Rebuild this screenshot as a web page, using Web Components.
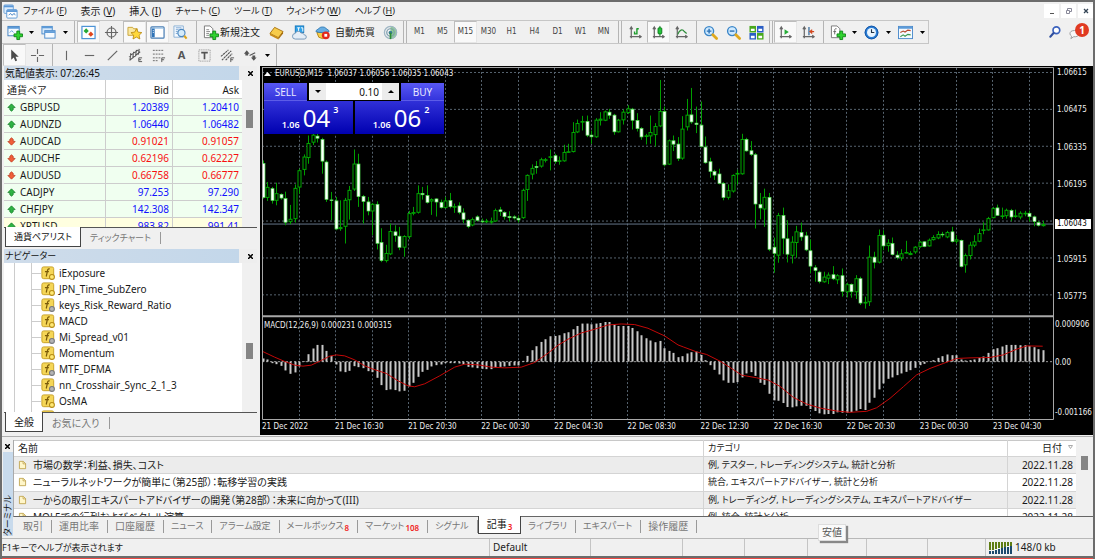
<!DOCTYPE html>
<html>
<head>
<meta charset="utf-8">
<title>EURUSD,M15</title>
<style>
  html, body { margin: 0; padding: 0; }
  body {
    background: #f0f0f0; color: #1a1a1a;
    font: 10px/16px "Noto Sans", "Noto Sans CJK JP", sans-serif;
    font-feature-settings: "palt";
  }
</style>
</head>
<body>
<app-window>
  <menu-bar></menu-bar>
  <main-toolbar></main-toolbar>
  <draw-toolbar></draw-toolbar>
  <work-space>
    <dock-panel slot="side" heading="気配値表示: 07:26:45" tabs="通貨ペアリスト|ティックチャート"><market-watch></market-watch></dock-panel>
    <dock-panel tall slot="side" heading="ナビゲーター" tabs="全般|お気に入り"><nav-tree></nav-tree></dock-panel>
    <chart-view><trade-panel></trade-panel></chart-view>
  </work-space>
  <terminal-panel></terminal-panel>
  <status-bar></status-bar>
</app-window>

<script>
const RESET = `<style>
  *, :host { box-sizing: border-box; }
  button { font: inherit; font-feature-settings: inherit; color: inherit; background: none; border: 0; margin: 0; padding: 0; white-space: nowrap; }
  svg { display: block; }
  .kana { font-size: 9px; }
</style>`;

/* Labels made mostly of kana are set one size down, as in the narrow system font. */
const kana = t => /[ァ-ヶー]{3}|[ぁ-ん]{2}/.test(t) ? "kana" : "";

class Part extends HTMLElement {
  constructor() {
    super();
    this.attachShadow({ mode: "open" });
  }
  connectedCallback() {
    if (this.shadowRoot.childNodes.length) return;
    const t = document.createElement("template");
    t.innerHTML = RESET + this.view();
    this.shadowRoot.append(t.content.cloneNode(true));
  }
  view() { return ""; }
}

const AX = '<path d="M3.500 2v12M2 12.500h12M2 4.500l1.500-2.500 1.500 2.500M12 11l2 1.500-2 1.500" fill="none" stroke="#666" stroke-width="1.300"/>';
const PLUS = '<path d="M10.500 6.500h3v3h3v3h-3v3h-3v-3h-3v-3h3z" fill="#2fd32f" stroke="#12871a"/>';
const LENS = '<circle cx="6.500" cy="6.500" r="4.800" fill="#cfeaff" stroke="#3b86c8" stroke-width="1.500"/><path d="M10.500 10.500l4 4" stroke="#e0a91c" stroke-width="3" stroke-linecap="round"/>';
const ICONS = {
  logo: '<rect x="1" y="1" width="10" height="9" rx="1" fill="#dcecfb" stroke="#6fa3d8"/><path d="M1 2.500h10" stroke="#5b97d6" stroke-width="2"/><rect x="4" y="6" width="11" height="9" rx="1" fill="#fff" stroke="#5b97d6"/><path d="M4 7.500h11" stroke="#5b97d6" stroke-width="2"/><path d="M6 12l2-2 1.500 2L12 10l1 2" fill="none" stroke="#4a86c6"/>',
  newchart: '<rect x="1" y="1.500" width="12" height="10" fill="#f5faff" stroke="#3f7fbf"/><path d="M1 3h12" stroke="#5d9bd8" stroke-width="2"/><path d="M3 8l2-2 2 2" fill="none" stroke="#5d9bd8"/>' + PLUS,
  profiles: '<rect x="1" y="1.500" width="11" height="8" fill="#d7e9fa" stroke="#4a8acb"/><path d="M1 2.500h11" stroke="#5d9bd8" stroke-width="2"/><rect x="4" y="6" width="11" height="8" fill="#f5faff" stroke="#4a8acb"/><path d="M4 7.500h11" stroke="#5d9bd8" stroke-width="2"/>',
  market: '<rect x="1" y="1.500" width="14" height="13" fill="#fff" stroke="#4c93d6" stroke-width="1.300"/><path d="M5.500 3.500l2.800 2.800-2.800 2.800-2.800-2.800z" fill="#27a836"/><path d="M10.500 7l2.800 2.800-2.800 2.800-2.800-2.800z" fill="#e0471f"/>',
  target: '<circle cx="8" cy="8" r="4.800" fill="none" stroke="#666" stroke-width="1.300"/><path d="M8 1v14M1 8h14" stroke="#666" stroke-width="1.200"/>',
  favorite: '<path d="M1 2.500h5l1 1.500h4v7H1z" fill="#fbe9a2" stroke="#c9a43a"/><path d="M10 4l1.800 3.600 4 .5-2.900 2.800.8 4-3.700-2-3.600 2 .7-4-2.900-2.800 4-.5z" fill="#ffd83a" stroke="#b98a12" stroke-width=".9"/>',
  navigator: '<rect x="1" y="2" width="14" height="12" rx="1" fill="#fff" stroke="#4a7fb5" stroke-width="1.300"/><path d="M2 3h3v10H2z" fill="#2f73b7"/><path d="M2 3.500h12" stroke="#9cc4e8"/><path d="M3 6h1M3 8h1" stroke="#fff"/>',
  tester: '<path d="M1 1h10v12H1z" fill="#f5faff" stroke="#8ab0d4"/><path d="M3 3h6M3 5h3M3 7h2M3 9h2" stroke="#7aa5d2"/><circle cx="9" cy="8.500" r="3.800" fill="#d4ebfb" stroke="#4a86bf" stroke-width="1.200"/><path d="M12 11.500l2.500 3" stroke="#dba41b" stroke-width="2.200"/>',
  order: '<path d="M1.500 1h6l3 3v9.500h-9z" fill="#fff" stroke="#777"/><path d="M3.500 5h3M3.500 7h4M3.500 9h3M3.500 11h3" stroke="#888"/>' + PLUS,
  gold: '<path d="M1 9l5-6.500 9 4.500-5 6.500z" fill="#f7cc4b" stroke="#a97311"/><path d="M1 9l9 4.500v2L1 11z" fill="#c98c17"/><path d="M10 13.500L15 7v2l-5 6.500z" fill="#a66c0c"/>',
  cloud: '<rect x="3.500" y="1" width="9" height="7" fill="#2fa3ea" stroke="#1677bb"/><path d="M5.500 3h3M7 3v4M9.500 3h2v4" stroke="#fff" fill="none"/><path d="M3.500 15a3 3 0 010-6 3.200 3.200 0 016-.5 3 3 0 013.500 2 2.200 2.200 0 010 4.500z" fill="#e4edf6" stroke="#7396b8"/>',
  expert: '<path d="M2 8h11l-2 5-3 1.500-4-1.500z" fill="#f7ce4a" stroke="#b48413"/><path d="M1 7c0-2 2-2 3-3 1-2.500 7-2.500 8 0 1 1 3 1 3 3-3 1.500-11 1.500-14 0z" fill="#69aee2" stroke="#357db5"/><circle cx="11.500" cy="11" r="4.200" fill="#e2291c"/><rect x="10" y="9.500" width="3" height="3" fill="#fff"/>',
  signal: '<path d="M8 1a7 7 0 010 14z" fill="#8fce8f"/><circle cx="8" cy="8" r="6.500" fill="none" stroke="#9fb6c4" stroke-width="1.400"/><circle cx="8" cy="8" r="4" fill="none" stroke="#7b9cae" stroke-width="1.300"/><circle cx="8" cy="8" r="2" fill="#3c7f9c"/><path d="M8 8v7" stroke="#2a8c34" stroke-width="1.800"/>',
  bars: AX + '<path d="M7 10V7M9.500 10V3.500M9.500 4h2M7.500 9.500h2" stroke="#1c9b2b" stroke-width="1.500"/>',
  candles: AX + '<path d="M9.500 1v11" stroke="#0c7a1b"/><rect x="7.500" y="3" width="4" height="6.500" rx="1" fill="#24c43a" stroke="#0c7a1b"/>',
  line: AX + '<path d="M4 10c2-5 5-6 7-3l2.500 2" fill="none" stroke="#2e8d3a" stroke-width="1.300"/>',
  zoomin: LENS + '<path d="M4 6.500h5M6.500 4v5" stroke="#2d72b4" stroke-width="1.500"/>',
  zoomout: LENS + '<path d="M4 6.500h5" stroke="#2d72b4" stroke-width="1.500"/>',
  tiles: '<path d="M.5 1h7v7h-7z" fill="#48a81d"/><path d="M8.500 1h7v7h-7z" fill="#2a5dc4"/><path d="M.5 8.500h7v7h-7z" fill="#2a5dc4"/><path d="M8.500 8.500h7v7h-7z" fill="#48a81d"/><path d="M2 4h4v2.500H2zM10 4h4v2.500h-4zM2 11.500h4V14H2zM10 11.500h4V14h-4z" fill="#fff"/>',
  autoscroll: AX + '<path d="M7 4.500v6l4.500-3z" fill="#27ad37"/>',
  shift: AX + '<path d="M8.500 2v9" stroke="#3b6f9f" stroke-width="1.400"/><path d="M14 7H10M12 5l-2.500 2 2.500 2" fill="none" stroke="#d2471f" stroke-width="1.300"/>',
  indicators: '<path d="M1.500 1h6l3 3v9.500h-9z" fill="#fff" stroke="#777"/><path d="M7 4c-2-.5-2 1-2 2v4M3.500 7h3" stroke="#666" fill="none"/>' + PLUS,
  clock: '<circle cx="8" cy="8" r="7.300" fill="#2b7fd6"/><circle cx="8" cy="8" r="6.800" fill="none" stroke="#1554a3"/><circle cx="8" cy="8" r="4.800" fill="#eaf5ff"/><path d="M8 4.500V8h3" fill="none" stroke="#234" stroke-width="1.200"/>',
  template: '<rect x=".5" y="1.500" width="15" height="13" fill="#f5faff" stroke="#4a8acb"/><path d="M1 3h14" stroke="#5d9bd8" stroke-width="2"/><path d="M2.500 8l3-1.500 2 1 3-2 3 .5" fill="none" stroke="#b5462b" stroke-width="1.200"/><path d="M2.500 12.500l3-2 2 1.500 3-2 3 .5" fill="none" stroke="#3c9950" stroke-width="1.200"/>',
  search: '<circle cx="10" cy="5.500" r="3.600" fill="#fff" stroke="#3b62bd" stroke-width="1.800"/><path d="M7 8.500L3.500 12.500" stroke="#2f4f9f" stroke-width="2.200" stroke-linecap="round"/>',
  chat: '<path d="M1 9.500a5 3.600 0 1110 0 5 3.600 0 01-6 3l-3 2 .8-2.500A4 4 0 011 9.500z" fill="#f8f8f8" stroke="#999"/>',
  cursor: '<path d="M4.500 1.500v11l2.700-2.400 1.700 4 1.900-.8-1.700-3.900h3.400z" fill="#4b4b4b"/>',
  cross: '<path d="M8 1v5.500M8 9.500V15M1 8h5.500M9.500 8H15" stroke="#666" stroke-width="1.200"/>',
  vline: '<path d="M8 3v10" stroke="#666" stroke-width="1.200"/>',
  hline: '<path d="M3 8h10" stroke="#666" stroke-width="1.200"/>',
  trend: '<path d="M3 13L13 3" stroke="#666" stroke-width="1.300"/>',
  channel: '<path d="M1 9l10-7M2 13L13 4M3 5.500l-1 8M6 4l-1 7M9 2L8 9M12 1l-1 6" stroke="#555" stroke-width="1.100"/><path d="M15 10.500h-3.500v4H15M11.500 12.500H14" fill="none" stroke="#555"/>',
  fibo: '<path d="M2 2.500h12M2 6.500h12M2 10.500h8M2 13.500h6" stroke="#666" stroke-dasharray="2 1"/><path d="M15 10.500h-3.500v4.500M11.500 12.500H14" fill="none" stroke="#555"/>',
  label: '<rect x="2" y="2" width="12" height="12" fill="none" stroke="#888" stroke-dasharray="1 1"/><path d="M4.500 5h7M8 5v7" stroke="#555" stroke-width="1.800"/>',
  fan: '<path d="M1 9l8-7M2 13L12 3M6 13l7-7" stroke="#555" stroke-width="1.200" stroke-dasharray="2.500 .6"/><path d="M15 10.500h-3.500v4.500M11.500 12.500H14" fill="none" stroke="#555"/>',
  shapes: '<path d="M4 2.500L7 6H5.500v2h-3V6H1z" fill="#555"/><path d="M7 8l6-3" stroke="#555" stroke-width="1.200"/><path d="M11.500 13.500l-3-3.500H10V8h3v2h1.500z" fill="#555"/>',
  up: '<path d="M8 1.500L14.500 8 11 8.500V12L8 14.500 5 12V8.500L1.500 8z" fill="#2fb344" stroke="#137a26" stroke-width="1.300"/>',
  down: '<path d="M8 14.500L14.500 8 11 7.500V4L8 1.500 5 4v3.500L1.500 8z" fill="#f0603a" stroke="#b8341b" stroke-width="1.300"/>',
  doc: '<path d="M2.500 1.500h7l4 4v9h-11z" fill="#fff6c9" stroke="#b99a3f" stroke-width="1.400"/><path d="M9 2v4h4.500" fill="none" stroke="#b99a3f" stroke-width="1.300"/>'
};
ICONS.fgold = '<rect x="1" y="1" width="13.500" height="13.500" rx="2" fill="#f5d657" stroke="#c39a1b"/><path d="M10 3.500c-2-1-2.500 1-2.800 3L6 12M4.500 6.500h4.500" fill="none" stroke="#7a5a08" stroke-width="1.400"/><circle cx="12.500" cy="12.500" r="2.800" fill="#ffe873" stroke="#b58a14" stroke-width="1.200"/>';
ICONS.fgray = ICONS.fgold.replace('#ffe873" stroke="#b58a14', '#b4b4b4" stroke="#75777c');

class ToolIcon extends Part {
  view() {
    return `<style>:host { display: block; flex: none; width: 15px; height: 15px; } svg { width: 100%; height: 100%; overflow: visible; }</style>
      <svg viewBox="0 0 16 16" aria-hidden="true">${ICONS[this.getAttribute("name")]}</svg>`;
  }
}

class ToolButton extends Part {
  view() {
    return `<style>
      :host { display: flex; flex: none; min-width: 23px; height: 22px; }
      button { flex: 1; display: flex; align-items: center; justify-content: center; gap: 2px; border: 1px solid transparent; padding: 0 1px; }
      :host([text]) button { padding-right: 4px; }
      :host([roomy]) button { gap: 5px; padding: 0 3px; }
      :host([pressed]) button { background: #f9f9f9; border-color: #bdbdbd #e6e6e6 #e6e6e6 #bdbdbd; }
      :host([frame]) button { padding: 0; font: 8px/12px "DejaVu Sans Condensed", "DejaVu Sans", sans-serif; color: #444; }
    </style><button type="button" aria-label="${this.getAttribute("tip") || ""}"><slot></slot></button>`.replace(' aria-label=""', "");
  }
}

class DropArrow extends Part {
  view() {
    return `<style>:host { display: flex; flex: none; width: 11px; } button { flex: 1; display: grid; place-items: center; }</style>
      <button type="button" aria-label="メニュー"><svg width="5" height="3" viewBox="0 0 5 3"><path d="M0 0h5L2.500 3z"/></svg></button>`;
  }
}

class ToolSep extends Part {
  view() {
    return `<style>
      :host { display: flex; justify-content: center; flex: none; width: 6px; height: 22px; }
      :host([wide]) { width: 9px; }
      :host([double]) { gap: 2px; }
      i { width: 1px; background: #b4b4b4; }
      .b { display: none; } :host([double]) .b { display: block; }
    </style><i></i><i class="b"></i>`;
  }
}

const tool = (name, tip, extra = "") => `<tool-button tip="${tip}" ${extra}><tool-icon name="${name}"></tool-icon></tool-button>`;

class AppWindow extends Part {
  view() {
    return `<style>
      :host { display: flex; flex-direction: column; height: 100vh; min-height: 480px; overflow: hidden; background: #f0f0f0;
        border: 2px solid #6c6c6c; border-bottom: 0; }
      .edge { flex: none; height: 3px; border-top: 2px solid #6c6c6c; background: #ee4a45; }
    </style><slot></slot><div class="edge"></div>`;
  }
}

class MenuBar extends Part {
  view() {
    const items = ["ファイル|F", "表示|V", "挿入|I", "チャート|C", "ツール|T", "ウィンドウ|W", "ヘルプ|H"];
    return `<style>
      :host { display: flex; flex: none; align-items: center; height: 18px; padding-left: 1px; }
      nav { display: flex; flex: 1; gap: 14px; padding-left: 5px; }
      .win { display: flex; gap: 2px; }
      .win button { width: 15px; height: 14px; background: #fff; display: grid; place-items: center; }
    </style>
    <tool-icon name="logo"></tool-icon>
    <nav>${items.map(i => { const [t, k] = i.split("|"); return `<button type="button" class="${kana(t)}">${t} (<u>${k}</u>)</button>`; }).join("")}</nav>
    <div class="win">
      <button type="button" aria-label="最小化"><svg width="8" height="8"><path d="M2 6.500h4" stroke="#555"/></svg></button>
      <button type="button" aria-label="元に戻す"><svg width="8" height="8" fill="none" stroke="#889"><path d="M2.500 3V1.500h4v3H5M1.500 3.500h3v3h-3z"/></svg></button>
      <button type="button" aria-label="閉じる"><svg width="8" height="8"><path d="M2 2l4 4M6 2L2 6" stroke="#345" stroke-width="1.300"/></svg></button>
    </div>`;
  }
}

class MainToolbar extends Part {
  view() {
    const frames = ["M1", "M5", "M15", "M30", "H1", "H4", "D1", "W1", "MN"];
    const p = "pressed";
    return `<style>
      :host { display: flex; flex: none; height: 24px; align-items: center; }
      .row { display: flex; align-items: center; height: 24px; padding-left: 1px; border: solid #c6c6c6; border-width: 1px 1px 1px 0; }
      .frames { display: flex; }
      .end { flex: 1; display: flex; justify-content: flex-end; align-items: center; gap: 7px; padding-right: 9px; }
      .chat { position: relative; }
      .chat b { position: absolute; right: -5px; top: -2px; width: 14px; height: 14px; border-radius: 7px; background: #e03a22; color: #fff; font-size: 10px; line-height: 14px; text-align: center; }
    </style>
    <div class="row">
      ${tool("newchart", "新規チャート")}<drop-arrow></drop-arrow>
      ${tool("profiles", "チャートの組表示")}<drop-arrow></drop-arrow><tool-sep></tool-sep>
      ${tool("market", "気配値表示", p)}${tool("target", "データウィンドウ")}${tool("favorite", "ナビゲーター", p)}${tool("navigator", "ターミナル", p)}${tool("tester", "ストラテジーテスター")}
      <tool-sep wide></tool-sep>
      <tool-button text><tool-icon name="order"></tool-icon>新規注文</tool-button>
      ${tool("gold", "MetaEditor")}${tool("cloud", "クラウド")}
      <tool-button roomy><tool-icon name="expert"></tool-icon>自動売買</tool-button>
      ${tool("signal", "シグナル")}
      <tool-sep double></tool-sep>
      <div class="frames">${frames.map(f => `<tool-button frame ${f === "M15" ? p : ""}>${f}</tool-button>`).join("")}</div>
      <tool-sep wide double></tool-sep>
      ${tool("bars", "バーチャート")}${tool("candles", "ローソク足", p)}${tool("line", "ラインチャート")}<tool-sep></tool-sep>
      ${tool("zoomin", "拡大")}${tool("zoomout", "縮小")}${tool("tiles", "整列")}<tool-sep double></tool-sep>
      ${tool("autoscroll", "自動スクロール", p)}${tool("shift", "チャートシフト")}<tool-sep></tool-sep>
      ${tool("indicators", "インディケータ")}<drop-arrow></drop-arrow>
      ${tool("clock", "時間足設定")}<drop-arrow></drop-arrow>
      ${tool("template", "定型チャート")}<drop-arrow></drop-arrow>
    </div>
    <div class="end"><button type="button" aria-label="検索"><tool-icon name="search"></tool-icon></button>
      <button type="button" class="chat"><tool-icon name="chat"></tool-icon><b>1</b></button></div>`;
  }
}

class DrawToolbar extends Part {
  view() {
    return `<style>
      :host { display: flex; flex: none; height: 22px; align-items: center; padding-left: 1px; }
      b { font-size: 11px; color: #555; }
    </style>
    ${tool("cursor", "カーソル", "pressed")}${tool("cross", "クロスヘア")}<tool-sep></tool-sep>
    ${tool("vline", "垂直線")}${tool("hline", "水平線")}${tool("trend", "トレンドライン")}${tool("channel", "チャネル")}${tool("fibo", "フィボナッチ")}
    <tool-button><b>A</b></tool-button>${tool("label", "テキストラベル")}${tool("fan", "ファン")}${tool("shapes", "矢印")}<drop-arrow></drop-arrow><tool-sep></tool-sep>`;
  }
}

class WorkSpace extends Part {
  view() {
    return `<style>
      :host { display: grid; flex: 1; min-height: 0; grid-template-columns: 255px minmax(0, 1fr); gap: 3px; }
      .side { display: flex; flex-direction: column; min-height: 0; gap: 2px; padding-bottom: 4px; }
    </style><div class="side"><slot name="side"></slot></div><slot></slot>`;
  }
}

class DockPanel extends Part {
  view() {
    const head = this.getAttribute("heading");
    const tabs = this.getAttribute("tabs").split("|");
    return `<style>
      :host { display: flex; flex-direction: column; flex: 1 1 0; min-height: 0; padding-left: 2px; }
      :host([tall]) { flex-basis: 2px; }
      header { display: flex; align-items: center; flex: none; height: 14px; padding: 0 4px 0 1px; color: #111; background: linear-gradient(90deg, #cfdcea, #c3d7ea 93%, #eee 93%); }
      header span { flex: 1; line-height: 14px; }
      .body { flex: 1; min-height: 0; overflow: hidden; background: #fff; border-bottom: 1px solid #555; }
      footer { display: flex; flex: none; height: 19px; }
      footer button { padding: 0 9px; color: #777; }
      footer button:first-child { color: #111; background: #fff; border: 1px solid #444; border-top: 0; margin: -1px 0 0 1px; padding: 0 8px; }
      footer i { width: 1px; margin: 4px 0 3px; background: #999; }
    </style>
    <header><span class="${kana(head)}">${head}</span>
      <button type="button" aria-label="閉じる"><svg width="5" height="5"><path d="M0 0l5 5M5 0L0 5" stroke="#000" stroke-width="1.500"/></svg></button></header>
    <div class="body"><slot></slot></div>
    <footer>${tabs.map(t => `<button type="button" class="${kana(t)}">${t}</button>`).join("")}<i></i></footer>`;
  }
}

class MarketWatch extends Part {
  view() {
    const rows = [["GBPUSD", "1.20389", "1.20410", 1], ["AUDNZD", "1.06440", "1.06482", 1], ["AUDCAD", "0.91021", "0.91057", 0],
      ["AUDCHF", "0.62196", "0.62227", 0], ["AUDUSD", "0.66758", "0.66777", 0], ["CADJPY", "97.253", "97.290", 1],
      ["CHFJPY", "142.308", "142.347", 1], ["XPTUSD", "983.82", "991.41", 1]];
    return `<style>
      :host { display: flex; }
      table { flex: 1; border-collapse: separate; border-spacing: 0; table-layout: fixed; width: 100%; }
      th, td { height: 17px; line-height: 16px; padding: 0 3px; border: solid #cdcdcd; border-width: 0 1px 1px 0; font-weight: 400; text-align: right; }
      th { height: 19px; padding-top: 1px; }
      th:first-child, td:first-child { text-align: left; }
      td:last-child, th:last-child { border-right: 0; }
      tbody tr { background: #f0fff0; } tbody tr:last-child { background: #ffffe0; }
      .up { color: #1111ff; } .down { color: #f81010; }
      .s { display: flex; align-items: center; gap: 4px; }
      .s tool-icon { width: 9px; height: 9px; }
      .bar { width: 15px; background: #f0f0f0; padding: 30px 4px 0; } .bar i { display: block; height: 18px; background: #858585; }
    </style>
    <table><colgroup><col style="width:102px"><col style="width:67px"><col></colgroup>
    <thead><tr><th>通貨ペア</th><th>Bid</th><th>Ask</th></tr></thead><tbody>
    ${rows.map(([s, b, a, u]) => { const c = u ? "up" : "down"; return `<tr><td><span class="s"><tool-icon name="${c}"></tool-icon>${s}</span></td><td class="${c}">${b}</td><td class="${c}">${a}</td></tr>`; }).join("")}
    </tbody></table><div class="bar"><i></i></div>`;
  }
}

class NavTree extends Part {
  view() {
    const rows = ["iExposure", "JPN_Time_SubZero", "keys_Risk_Reward_Ratio*", "MACD", "Mi_Spread_v01*", "Momentum", "MTF_DFMA*", "nn_Crosshair_Sync_2_1_3*", "OsMA", "Parabolic"];
    return `<style>
      :host { display: flex; }
      ul { flex: 1; margin: 0; padding: 2px 0 0; list-style: none; background: linear-gradient(#ccc, #ccc) 10px 0 / 1px 100% no-repeat, linear-gradient(#ccc, #ccc) 27px 0 / 1px 100% no-repeat; }
      li { display: flex; align-items: center; height: 16px; gap: 4px; }
      li::before { content: ""; width: 10px; height: 1px; margin: 0 -4px 0 27px; background: #ccc; }
      tool-icon { width: 14px; height: 14px; }
      .bar { width: 15px; background: #f0f0f0; padding: 80px 4px 0; } .bar i { display: block; height: 16px; background: #858585; }
    </style>
    <ul>${rows.map(r => `<li><tool-icon name="${r.endsWith("*") ? "fgray" : "fgold"}"></tool-icon><span>${r.replace("*", "")}</span></li>`).join("")}</ul><div class="bar"><i></i></div>`;
  }
}

/* Each candle: high, body top, body bottom, low, 1 when the bar closed lower. Three steps make one unit of the drawing. */
const CANDLES = [[290,298,402,405,1],[355,370,402,412,0],[370,374,411,420,1],[357,389,411,425,0],[389,391,404,408,1],[384,404,477,485,1],[424,466,475,482,0],[362,373,466,477,0],[315,320,371,390,0],[272,279,318,335,0],[215,238,282,300,0],[209,213,236,244,0],[209,216,224,236,1],[222,226,293,330,1],[290,294,408,415,1],[385,408,412,470,1],[400,411,497,500,1],[410,491,496,502,0],[403,409,489,540,0],[367,379,409,468,0],[257,300,377,382,0],[270,300,400,430,1],[394,397,414,480,1],[400,414,443,455,1],[418,421,443,515,0],[413,421,540,558,1],[494,536,592,596,1],[544,569,592,597,0],[480,503,572,575,0],[485,504,517,535,1],[490,517,552,560,1],[515,518,552,580,0],[442,449,520,527,0],[430,446,450,455,0],[365,389,447,450,0],[370,388,394,408,1],[365,395,417,420,1],[404,407,413,454,0],[404,405,416,459,1],[408,415,432,435,1],[400,411,433,434,0],[388,410,430,434,1],[420,428,431,448,0],[416,426,447,452,1],[434,447,468,479,1],[467,469,489,494,1],[462,467,485,488,0],[455,459,471,474,1],[465,472,475,478,1],[466,472,475,479,0],[462,473,476,482,0],[435,440,473,475,0],[430,438,445,457,1],[443,446,460,468,1],[443,458,463,474,1],[455,459,464,468,1],[456,463,470,477,1],[375,379,463,466,0],[332,334,378,412,0],[302,313,332,347,0],[292,307,312,330,1],[282,287,308,312,0],[283,287,290,296,0],[257,278,281,320,0],[270,275,294,300,1],[278,290,293,303,0],[243,265,292,294,0],[240,263,266,267,0],[175,205,264,266,0],[167,178,205,208,0],[156,172,175,200,0],[155,172,215,220,1],[200,213,220,240,1],[163,168,220,222,0],[145,165,170,185,0],[140,143,170,172,0],[135,144,155,165,1],[150,153,205,213,1],[165,168,205,206,0],[137,144,169,182,0],[124,134,147,150,0],[132,135,170,197,1],[148,169,195,203,1],[190,193,220,228,1],[210,215,219,242,0],[155,205,217,240,0],[178,187,213,248,0],[48,142,187,190,0],[128,142,304,308,1],[227,230,302,304,0],[215,230,242,262,1],[220,240,285,292,1],[157,195,284,288,0],[105,153,190,200,0],[72,152,175,180,1],[128,177,183,208,1],[113,183,249,251,1],[218,249,298,300,1],[282,293,324,342,1],[318,322,335,349,1],[315,330,360,362,1],[355,358,402,410,1],[362,380,402,408,0],[332,334,383,387,0],[318,328,332,362,0],[210,226,331,333,0],[222,226,262,264,1],[232,260,273,277,1],[268,272,422,495,1],[388,421,434,467,1],[375,400,437,490,0],[388,400,558,563,1],[522,550,570,628,1],[448,455,576,598,0],[432,455,525,572,1],[470,525,573,597,1],[518,535,576,600,0],[487,504,538,583,0],[477,506,521,532,1],[505,516,560,563,1],[528,561,609,629,1],[605,612,622,655,1],[622,625,655,660,1],[625,640,656,658,0],[627,634,645,662,0],[608,633,647,650,1],[632,636,650,662,0],[615,636,685,700,1],[658,663,686,702,0],[660,662,686,703,1],[635,645,686,707,0],[640,645,720,725,1],[700,716,720,736,0],[546,580,716,728,0],[565,580,597,615,1],[498,515,597,600,0],[500,514,548,560,1],[527,538,547,565,0],[522,539,574,576,1],[563,574,583,588,1],[557,570,584,592,0],[532,566,569,570,0],[563,569,574,575,0],[548,550,566,571,0],[533,535,550,553,0],[533,534,550,551,1],[525,529,548,549,0],[515,521,529,531,0],[503,512,524,527,0],[505,511,515,521,1],[502,506,521,524,0],[490,504,535,537,1],[515,528,534,540,0],[528,530,610,612,1],[570,575,605,628,0],[535,544,577,588,0],[515,534,546,551,0],[495,509,534,536,0],[476,498,501,512,0],[460,464,500,501,0],[430,434,463,464,0],[423,432,456,457,1],[432,456,459,466,0],[435,439,457,465,0],[436,440,461,473,1],[438,456,459,463,0],[443,448,461,467,0],[442,448,451,458,0],[441,448,460,474,1],[456,459,475,488,1],[472,476,486,489,1],[472,482,487,489,0]];
const MACD = [388,391,402,405,410,424,434,430,412,396,375,358,347,347,365,380,406,427,429,425,411,414,417,426,429,446,468,483,481,483,487,485,472,461,443,428,422,412,408,406,402,402,402,403,406,413,415,417,419,420,420,415,413,412,410,409,409,395,380,363,351,338,330,321,320,318,312,309,300,290,283,283,285,283,281,278,278,286,290,290,290,296,306,318,327,334,339,335,357,365,371,384,381,373,369,367,377,393,408,422,436,454,461,461,459,445,433,429,440,461,467,494,514,515,522,534,535,532,530,530,540,546,553,556,555,555,550,551,551,549,545,540,543,521,506,481,463,449,445,438,433,428,423,416,408,404,398,393,386,381,376,378,378,391,394,393,391,386,382,371,360,357,352,347,347,347,348,348,350,354,360,363];
const SIGNAL = [14,367,50,384,80,397,110,408,135,411,160,408,190,394,215,381,235,377,260,380,290,392,320,410,345,420,385,433,420,455,450,470,470,473,500,464,545,440,590,414,620,405,660,407,700,414,740,416,790,414,830,400,870,372,900,348,930,330,970,311,1010,300,1050,287,1090,284,1130,286,1170,297,1220,320,1260,347,1276,353,1316,368,1346,376,1386,396,1416,415,1451,438,1496,446,1531,453,1566,472,1606,505,1646,525,1686,537,1736,546,1776,550,1826,547,1856,536,1896,508,1936,473,1976,437,2016,418,2056,403,2096,388,2136,386,2196,385,2236,377,2276,360,2306,350,2354,351];

class ChartView extends Part {
  plot() {
    let s = "";
    const X = k => 262.6 + 4.5625 * k;
    for (let i = 0; i < 21; i++) { const x = Math.floor(299 + 36.5 * i) + .5; s += `<path class="g" d="M${x} 68V316M${x} 319V420"/>`; }
    for (let i = 0; i < 7; i++) { const y = Math.floor(72 + 37.3 * i) + .5; s += `<path class="g" d="M262 ${y}H1053"/>`; }
    s += '<path d="M262 224.500H1053" stroke="#64758a"/><path d="M262 362.500H1053" stroke="#999" stroke-dasharray="2 2"/>';
    CANDLES.forEach(([h, t, b, l, down], k) => {
      const x = Math.round(X(k)), y = v => (64 + v / 3).toFixed(1), hgt = Math.max(.6, (b - t) / 3 - .6).toFixed(1);
      s += `<path class="w" d="M${x + .5} ${y(h)}V${y(l)}"/><rect class="${down ? "d" : "u"}" x="${x - 1}" y="${y(t + 1)}" width="3" height="${hgt}"/>`;
    });
    MACD.forEach((v, k) => { s += `<path class="m" d="M${Math.round(X(k)) + .5} 362.500V${(230 + v / 3).toFixed(1)}"/>`; });
    let d = "";
    for (let i = 0; i < SIGNAL.length; i += 2) d += (i ? "L" : "M") + (258 + SIGNAL[i] / 3).toFixed(1) + " " + (230 + SIGNAL[i + 1] / 3).toFixed(1);
    return s + `<path d="${d}" fill="none" stroke="#c40808" stroke-linejoin="round"/>
      <path d="M262 67.500H1053.500V420.500H262.500V67" fill="none" stroke="#a8a8a8"/>
      <path d="M262 317H1053" stroke="#a8a8a8" stroke-width="2"/>`;
  }
  view() {
    const dates = ["21 Dec 2022", "21 Dec 16:30", "21 Dec 20:30", "22 Dec 00:30", "22 Dec 04:30", "22 Dec 08:30", "22 Dec 12:30", "22 Dec 16:30", "22 Dec 20:30", "23 Dec 00:30", "23 Dec 04:30"];
    return `<style>
      :host { display: grid; position: relative; grid-template: minmax(0, 1fr) 14px / minmax(0, 1fr) 39px; background: #000; color: #eee; padding: 1px 0 1px 2px; min-height: 0; margin-bottom: 1px;
        font: 8px/10px "DejaVu Sans Condensed", "DejaVu Sans", sans-serif; overflow: hidden; }
      svg.plot { width: 100%; height: 100%; min-height: 0; }
      .g { stroke: #56636f; stroke-dasharray: 2 2; }
      .w { stroke: #00a000; } .u { fill: #000; stroke: #00a800; } .d { fill: #fff; stroke: #4fe04f; stroke-width: .7; }
      .m { stroke: #c8c8c8; stroke-width: 2; }
      .axis { display: grid; grid-template-rows: 249fr 104fr; min-height: 0; position: relative; white-space: nowrap; }
      .prices { display: flex; flex-direction: column; justify-content: space-between; padding: 1px 0 14px 3px; }
      .prices span { height: 10px; }
      .levels { display: grid; grid-template-rows: 39fr 51fr 12px; padding: 4px 0 0 1px; }
      .now { position: absolute; left: 1px; right: 2px; top: 43%; background: #fff; color: #000; padding-left: 2px; }
      .dates { display: grid; grid-template-columns: repeat(10, 73fr) 61fr; white-space: nowrap; line-height: 14px; }
      .title, .macd { position: absolute; left: 4px; top: 3px; display: flex; gap: 4px; align-items: center; white-space: pre; }
      .macd { top: 69%; }
      ::slotted(trade-panel) { position: absolute; left: 4px; top: 17px; }
    </style>
    <svg class="plot" viewBox="262 67 792 354" preserveAspectRatio="none" role="img" aria-label="EURUSD M15">${this.plot()}</svg>
    <div class="axis">
      <div class="prices"><span>1.06615</span><span>1.06475</span><span>1.06335</span><span>1.06195</span><span></span><span>1.05915</span><span>1.05775</span></div>
      <div class="levels"><span>0.000906</span><span>0.00</span><span>-0.001166</span></div>
      <div class="now">1.06043</div>
    </div>
    <div class="dates">${dates.map(d => `<span>${d}</span>`).join("")}</div>
    <div class="title"><svg width="7" height="4"><path d="M0 4h7L3.500 0z" fill="#fff"/></svg><span>EURUSD,M15  1.06037 1.06056 1.06035 1.06043</span></div>
    <div class="macd">MACD(12,26,9) 0.000231 0.000315</div>
    <slot></slot>`;
  }
}

class TradePanel extends Part {
  view() {
    return `<style>
      :host { display: grid; grid-template: 18px 33px / 89px 89px; column-gap: 2px; color: #fff; background: #000; font: 10px/16px "Noto Sans", sans-serif; }
      .top { grid-column: 1 / 3; display: flex; min-width: 0; }
      .side { flex: none; width: 43px; background: linear-gradient(#5858f4, #3434dc); border-bottom: 1px solid #5c5ce8; color: #e8e8ff; }
      .lot { flex: 1; display: flex; min-width: 0; margin: 0 2px 1px; background: #fff; }
      .lot button { flex: none; width: 17px; background: #ececec; display: grid; place-items: center; }
      input { flex: 1; width: 0; min-width: 0; border: 0; padding: 0 3px; background: #fff; color: #111; font: inherit; text-align: right; outline: 0; }
      .q { display: flex; align-items: flex-end; justify-content: center; gap: 3px; background: linear-gradient(#3030d8, #0000b0); padding-left: 3px; }
      .q span, .q sup { font-size: 9px; line-height: 18px; font-weight: 600; }
      .q strong { font-size: 24px; line-height: 32px; font-weight: 400; }
      .q sup { align-self: flex-start; }
    </style>
    <div class="top"><button type="button" class="side">SELL</button>
      <div class="lot"><button type="button" aria-label="減らす"><svg width="6" height="3"><path d="M0 0h6L3 3z"/></svg></button>
      <input aria-label="ロット" value="0.10"><button type="button" aria-label="増やす"><svg width="6" height="3"><path d="M0 3h6L3 0z"/></svg></button></div>
      <button type="button" class="side">BUY</button></div>
    <button type="button" class="q"><span>1.06</span><strong>04</strong><sup>3</sup></button>
    <button type="button" class="q"><span>1.06</span><strong>06</strong><sup>2</sup></button>`;
  }
}

class TerminalPanel extends Part {
  view() {
    const rows = [["市場の数学：利益、損失、コスト", "例, テスター, トレーディングシステム, 統計と分析", "2022.11.28"],
      ["ニューラルネットワークが簡単に（第25部）：転移学習の実践", "統合, エキスパートアドバイザー, 統計と分析", "2022.11.28"],
      ["一からの取引エキスパートアドバイザーの開発（第28部）：未来に向かって(III)", "例, トレーディング, トレーディングシステム, エキスパートアドバイザー", "2022.11.28"],
      ["MQL5での行列およびベクトル演算", "例, 統合, 統計と分析", "2022.11.28"]];
    const tabs = ["取引", "運用比率", "口座履歴", "ニュース", "アラーム設定", "メールボックス|8", "マーケット|108", "シグナル", "記事|3", "ライブラリ", "エキスパート", "操作履歴"];
    return `<style>
      :host { display: grid; flex: none; grid-template-columns: 11px minmax(0, 1fr); grid-template-rows: 77px 22px; height: 103px; padding-top: 3px; border-top: 1px solid #b0b0b0; border-bottom: 1px solid #b8b8b8; position: relative; }
      .strip { grid-row: 1 / 3; display: flex; flex-direction: column; align-items: center; padding-bottom: 3px; }
      .strip button { height: 12px; }
      .strip div { flex: 1; width: 10px; background: #c8daec; writing-mode: vertical-rl; text-orientation: sideways; transform: rotate(180deg); line-height: 10px; font-size: 9px; white-space: nowrap; }
      .list { display: flex; overflow: hidden; background: #fff; border: solid #666; border-width: 0 0 1px; border-left: 1px solid #aaa; box-shadow: inset 0 1px #c8c8c8; }
      table { flex: 1; border-spacing: 0; table-layout: fixed; width: 100%; height: 86px; }
      th, td { height: 17px; line-height: 16px; padding: 0 3px 0 4px; font-weight: 400; text-align: left; border: solid #d4d4d4; border-width: 0 1px 1px 0; white-space: nowrap; overflow: hidden; }
      td:last-child, th:last-child { border-right: 0; text-align: right; }
      th:last-child svg { display: inline-block; margin: 0 0 3px 6px; }
      tbody tr:nth-child(odd) { background: #ececec; }
      .n { display: flex; align-items: center; gap: 6px; } .n tool-icon { width: 9px; height: 10px; }
      .bar { width: 17px; background: #f0f0f0; padding: 16px 5px 0; } .bar i { display: block; height: 14px; background: #858585; }
      nav { display: flex; }
      nav button { height: 17px; padding: 0 8px 0 7px; color: #777; border: solid; border-image: linear-gradient(transparent 20%, #999 20% 90%, transparent 90%) 1; border-width: 0 1px 0 0; }
      nav button:first-child { padding-left: 10px; }
      nav small { font-size: 8px; color: #f02020; margin-left: 1px; font-weight: 600; position: relative; top: 2px; }
      nav .on { background: #fff; color: #111; border: 1px solid #444; border-top: 0; border-image: none; margin-top: -1px; height: 18px; padding: 0 8px; }
      .tip { position: absolute; left: 74.8%; top: 87px; width: 28px; height: 17px; background: #fafafa; border: 1px solid #ddd; box-shadow: 2px 2px 1px #888; color: #555; text-align: center; line-height: 15px; z-index: 1; }
    </style>
    <div class="strip"><button type="button" aria-label="閉じる"><svg width="5" height="5"><path d="M0 0l5 5M5 0L0 5" stroke="#000" stroke-width="1.500"/></svg></button><div>ターミナル</div></div>
    <div class="list"><table><colgroup><col><col style="width:304px"><col style="width:68px"></colgroup>
      <thead><tr><th>名前</th><th class="kana">カテゴリ</th><th>日付<svg width="5" height="4"><path d="M.5.5h4l-2 3z" fill="none" stroke="#aaa"/></svg></th></tr></thead>
      <tbody>${rows.map(r => `<tr><td><span class="n"><tool-icon name="doc"></tool-icon><span>${r[0]}</span></span></td><td class="kana">${r[1]}</td><td>${r[2]}</td></tr>`).join("")}</tbody></table>
      <div class="bar"><i></i></div></div>
    <nav>${tabs.map(t => { const [n, c] = t.split("|"); return `<button type="button" class="${n === "記事" ? "on" : kana(n)}">${n}${c ? `<small>${c}</small>` : ""}</button>`; }).join("")}</nav>
    <div class="tip" role="tooltip">安値</div>`;
  }
}

class StatusBar extends Part {
  view() {
    let b = "";
    for (let i = 0; i < 8; i++) {
      const x = i * 3;
      b += `<path d="M${x + 1} 0v${8 - Math.floor(i * .7)}" stroke="#5f7d14" stroke-width="2"/><path d="M${x + 1} ${9 - Math.floor(i * .8)}V12" stroke="#1c4a6e" stroke-width="2"/>`;
    }
    return `<style>
      :host { display: grid; flex: none; height: 17px; line-height: 17px; grid-template-columns: 487fr 101fr 92fr 62fr 63fr 59fr 61fr 58fr 108fr; white-space: nowrap; overflow: hidden; }
      span { border-left: 1px solid #c4c4c4; padding-left: 3px; display: flex; align-items: center; gap: 2px; }
      span:first-of-type { border: 0; padding: 0; }
    </style><span class="kana">F1キーでヘルプが表示されます</span><span>Default</span><span></span><span></span><span></span><span></span><span></span><span></span><span><svg width="24" height="12" viewBox="0 0 24 12">${b}</svg>148/0 kb</span>`;
  }
}

[["tool-icon", ToolIcon], ["tool-button", ToolButton], ["drop-arrow", DropArrow], ["tool-sep", ToolSep], ["app-window", AppWindow], ["menu-bar", MenuBar],
 ["main-toolbar", MainToolbar], ["draw-toolbar", DrawToolbar], ["work-space", WorkSpace], ["dock-panel", DockPanel], ["market-watch", MarketWatch],
 ["nav-tree", NavTree], ["chart-view", ChartView], ["trade-panel", TradePanel], ["terminal-panel", TerminalPanel], ["status-bar", StatusBar]
].forEach(([tag, cls]) => customElements.define(tag, cls));
</script>
</body>
</html>
